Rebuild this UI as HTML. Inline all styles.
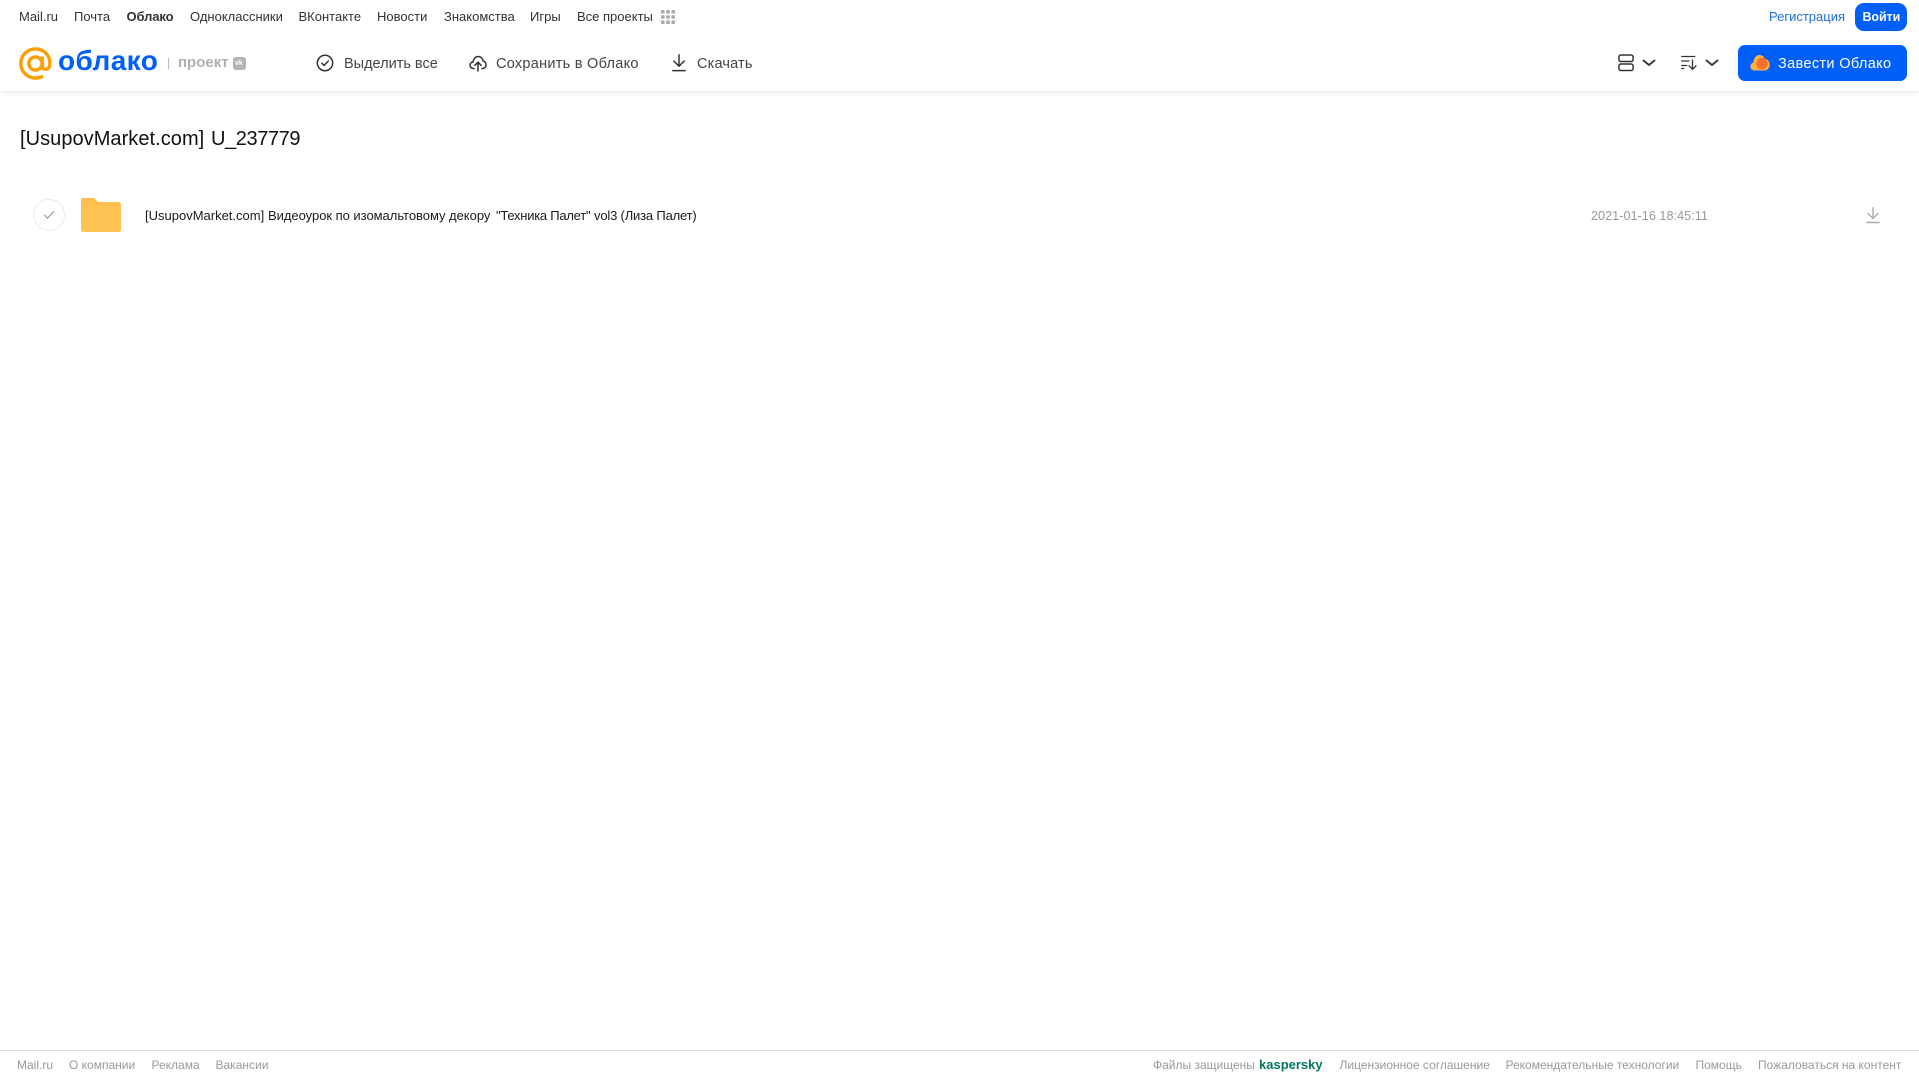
<!DOCTYPE html>
<html lang="ru">
<head>
<meta charset="utf-8">
<title>Облако</title>
<style>
html,body{margin:0;padding:0;background:#fff}
body{width:1919px;height:1079px;position:relative;overflow:hidden;font-family:"Liberation Sans","Noto Sans CJK SC",sans-serif}
.t{position:absolute;white-space:nowrap;line-height:20px}
.n{top:7px;font-size:13px;color:#333}
.a{top:54px;font-size:14.5px;color:#444}
.f{top:1055px;font-size:12px;color:#999}
.r{top:206px;font-size:13px;color:#1a1a1a}
svg{position:absolute;overflow:visible}
#hdr{position:absolute;left:0;top:0;width:1919px;height:91px;background:#fff;box-shadow:0 1px 6px rgba(0,0,0,.10)}
</style>
</head>
<body>
<div id="hdr"></div>

<span class="t n" style="left:19px">Mail.ru</span>
<span class="t n" style="left:74px">Почта</span>
<span class="t n" style="left:126.500px;font-weight:bold;letter-spacing:-.1px">Облако</span>
<span class="t n" style="left:190px">Одноклассники</span>
<span class="t n" style="left:298.500px">ВКонтакте</span>
<span class="t n" style="left:377px">Новости</span>
<span class="t n" style="left:444px">Знакомства</span>
<span class="t n" style="left:530px">Игры</span>
<span class="t n" style="left:577px">Все проекты</span>
<svg style="left:661px;top:10px" width="14" height="14" fill="#aaa">
<rect x="0" y="0" width="3.6" height="3.6" rx="1"/><rect x="5.2" y="0" width="3.6" height="3.6" rx="1"/><rect x="10.4" y="0" width="3.6" height="3.6" rx="1"/>
<rect x="0" y="5.2" width="3.6" height="3.6" rx="1"/><rect x="5.2" y="5.2" width="3.6" height="3.6" rx="1"/><rect x="10.4" y="5.2" width="3.6" height="3.6" rx="1"/>
<rect x="0" y="10.4" width="3.6" height="3.6" rx="1"/><rect x="5.2" y="10.4" width="3.6" height="3.6" rx="1"/><rect x="10.4" y="10.4" width="3.6" height="3.6" rx="1"/>
</svg>

<span class="t" style="left:1769px;top:7px;font-size:13px;color:#1f6fe0">Регистрация</span>
<div style="position:absolute;left:1855px;top:3px;width:52px;height:28px;border-radius:9px;background:#005ff9"></div>
<span class="t" style="left:1862.500px;top:7px;font-size:12.500px;color:#fff;font-weight:bold;letter-spacing:-.1px">Войти</span>

<!-- logo -->
<svg style="left:19px;top:47px" width="33" height="33" viewBox="0 0 33 33" fill="none" stroke="#ff9e00" stroke-width="3.4">
<circle cx="16.5" cy="16.5" r="6.6"/>
<path d="M23.2 9.6V19c0 4.6 7.5 4.8 7.7-2.2C31.2 8.4 24.8 1.9 16.5 1.9 8.3 1.9 1.8 8.4 1.8 16.5S8.3 31.100 16.500 31.100c3 0 5.300-.6 7.500-2"/>
</svg>
<span class="t" style="left:58px;top:45px;font-size:28px;line-height:32px;font-weight:bold;color:#005ff9;letter-spacing:.4px">облако</span>
<div style="position:absolute;left:168px;top:58px;width:1px;height:11px;background:#bbb"></div>
<span class="t" style="left:178px;top:53px;font-size:15px;font-weight:bold;color:#b0b0b0">проект</span>
<div style="position:absolute;left:233px;top:57px;width:13px;height:13px;border-radius:3px;background:#b3b3b3"></div>
<span class="t" style="left:235px;top:58px;font-size:7px;line-height:11px;font-weight:bold;color:#fff">vk</span>

<!-- actions -->
<svg style="left:316px;top:54px" width="18" height="18" viewBox="0 0 18 18" fill="none" stroke="#333" stroke-width="1.5" stroke-linecap="round" stroke-linejoin="round">
<circle cx="9" cy="9" r="7.700"/><path d="M5.800 9.200l2.300 2.300 4.200-4.500"/>
</svg>
<span class="t a" style="left:344px">Выделить все</span>
<svg style="left:469px;top:54px" width="18" height="18" viewBox="0 0 18 18" fill="none" stroke="#333" stroke-width="1.500" stroke-linecap="round" stroke-linejoin="round">
<path d="M5 14.500H4.300C2.400 14.500 1 13 1 11.300c0-1.700 1.200-3 2.900-3.200C4.300 5 6.400 2.500 9.200 2.500c2.600 0 4.600 2 5 4.600 1.700.3 2.900 1.900 2.900 3.700 0 2-1.400 3.700-3.300 3.700H13"/>
<path d="M9 17V8.500M5.900 11.300L9 8.200l3.100 3.100"/>
</svg>
<span class="t a" style="left:496px;letter-spacing:.27px">Сохранить в Облако</span>
<svg style="left:672px;top:54px" width="14" height="18" viewBox="0 0 14 18" fill="none" stroke="#333" stroke-width="1.500" stroke-linecap="round" stroke-linejoin="round">
<path d="M7 .8V12M1.800 7L7 12.200 12.200 7M.8 16.600h12.400"/>
</svg>
<span class="t a" style="left:697px;letter-spacing:.17px">Скачать</span>

<!-- view / sort -->
<svg style="left:1618px;top:54px" width="40" height="18" viewBox="0 0 40 18" fill="none" stroke="#333" stroke-width="1.500" stroke-linecap="round" stroke-linejoin="round">
<rect x=".9" y="1" width="14.200" height="6.500" rx="2"/><rect x=".9" y="10" width="14.200" height="6.500" rx="2"/>
<path d="M25.500 6.500l5.500 4.500 5.500-4.500" stroke-width="1.800"/>
</svg>
<svg style="left:1681px;top:54px" width="40" height="18" viewBox="0 0 40 18" fill="none" stroke="#333" stroke-width="1.300" stroke-linecap="round" stroke-linejoin="round">
<path d="M.8 2.500h13M.8 7h7M.8 11.500h5M.8 14.500h2M11.500 6v9M8 11.800l3.500 3.500 3.500-3.500"/>
<path d="M25.500 6.500l5.500 4.500 5.500-4.500" stroke-width="1.800"/>
</svg>

<!-- CTA -->
<div style="position:absolute;left:1738px;top:45px;width:169px;height:36px;border-radius:7px;background:#005ff9"></div>
<svg style="left:1750px;top:54px" width="20" height="17" viewBox="0 0 20 17">
<path d="M4.500 16.500C2 16.500 .4 14.600.4 12.400c0-1.900 1.200-3.400 3-3.900C3.700 4.600 6 1 9.300 1c2.700 0 4.700 1.600 5.500 3.900 2.800.2 4.900 2.600 4.900 5.700 0 3.300-2.400 5.900-5.500 5.900z" fill="#ffb13d"/>
<circle cx="12" cy="9.500" r="5.700" fill="#f4702c"/>
</svg>
<span class="t" style="left:1778px;top:54px;font-size:14.500px;color:#fff;letter-spacing:.35px">Завести Облако</span>

<!-- title -->
<span class="t" style="left:20px;top:126px;font-size:20px;line-height:26px;color:#111;letter-spacing:.05px">[UsupovMarket.com]</span>
<span class="t" style="left:211px;top:126px;font-size:20px;line-height:26px;color:#111;letter-spacing:-.4px">U_237779</span>

<!-- row -->
<div style="position:absolute;left:33px;top:199px;width:30px;height:30px;border:1px solid #ececec;border-radius:50%"></div>
<svg style="left:43px;top:210px" width="12" height="10" viewBox="0 0 12 10" fill="none" stroke="#a0a0a0" stroke-width="1.300" stroke-linecap="round" stroke-linejoin="round">
<path d="M1.500 5.200l3 3 6-6.400"/>
</svg>
<svg style="left:81px;top:198px" width="40" height="34" viewBox="0 0 40 34">
<path d="M0 2.500C0 1 1 0 2.500 0h9.300c1.100 0 1.800.4 2.500 1.100L17 4h20.500C39 4 40 5 40 6.500v25c0 1.500-1 2.500-2.500 2.500h-35C1 34 0 33 0 31.500z" fill="#ffbe4d"/>
<rect x="0" y="8" width="40" height="26" rx="2.500" fill="#ffc353"/>
</svg>
<span class="t r" style="left:145px">[UsupovMarket.com]</span>
<span class="t r" style="left:268px;letter-spacing:-.03px">Видеоурок по изомальтовому декору</span>
<span class="t r" style="left:496px;letter-spacing:-.25px">"Техника Палет"</span>
<span class="t r" style="left:594px;letter-spacing:-.18px">vol3 (Лиза Палет)</span>
<span class="t" style="left:1591px;top:206px;font-size:12.700px;color:#999">2021-01-16 18:45:11</span>
<svg style="left:1866px;top:207px" width="14" height="17" viewBox="0 0 14 17" fill="none" stroke="#aaa" stroke-width="1.400" stroke-linecap="round" stroke-linejoin="round">
<path d="M7 .8V11.500M2 6.500l5 5 5-5M.8 15.500h12.400"/>
</svg>

<!-- footer -->
<div style="position:absolute;left:0;top:1050px;width:1919px;height:1px;background:#dcdcdc"></div>
<span class="t f" style="left:17px">Mail.ru</span>
<span class="t f" style="left:69px">О компании</span>
<span class="t f" style="left:151.500px">Реклама</span>
<span class="t f" style="left:215.500px">Вакансии</span>
<span class="t f" style="left:1153px">Файлы защищены</span>
<span class="t f" style="left:1259px;font-size:13px;font-weight:bold;color:#00795f">kaspersky</span>
<span class="t f" style="left:1339.500px">Лицензионное соглашение</span>
<span class="t f" style="left:1505.500px">Рекомендательные технологии</span>
<span class="t f" style="left:1695.500px">Помощь</span>
<span class="t f" style="left:1758px">Пожаловаться на контент</span>
</body>
</html>
